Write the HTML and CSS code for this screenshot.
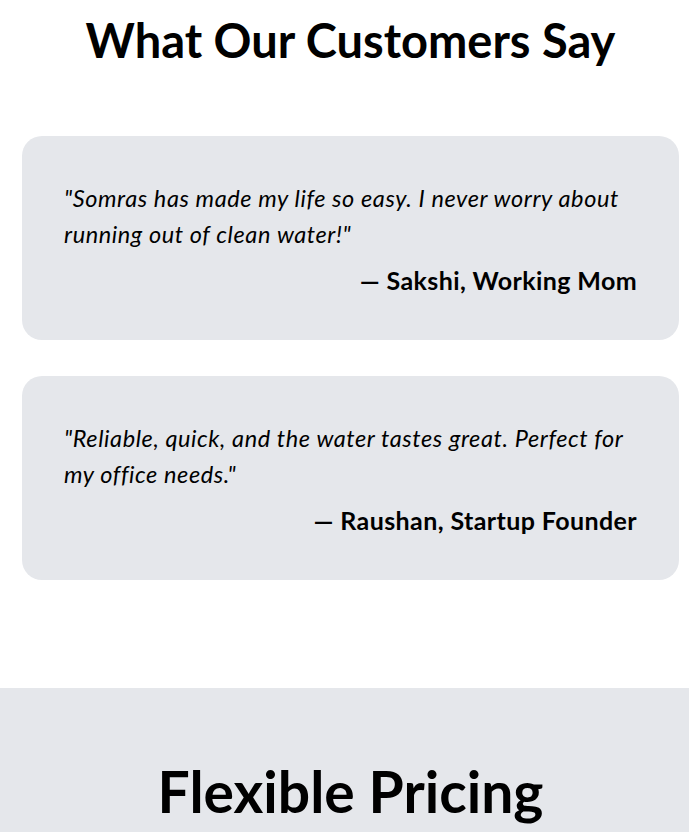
FILE: index.html
```html
<!DOCTYPE html>
<html>
<head>
<meta charset="utf-8">
<link rel="stylesheet" href="styles.css">
</head>
<body>
<section class="testimonials">
  <h2 class="title">What Our Customers Say</h2>
  <div class="cards">
    <div class="card">
      <p class="quote">"Somras has made my life so easy. I never worry about running out of clean water!"</p>
      <p class="author">— Sakshi, Working Mom</p>
    </div>
    <div class="card">
      <p class="quote">"Reliable, quick, and the water tastes great. Perfect for my office needs."</p>
      <p class="author">— Raushan, Startup Founder</p>
    </div>
  </div>
</section>
<section class="pricing">
  <h2 class="pricing-title">Flexible Pricing</h2>
</section>
</body>
</html>
```
FILE: styles.css
```css
body {
  margin: 0;
  font-family: Lato, "Open Sans", sans-serif;
  color: #000;
  background: #fff;
}
.testimonials {
  padding: 12px 10px 108px 22px;
}
.title {
  margin: 0;
  text-align: center;
  font-size: 47px;
  font-weight: 700;
  line-height: 56px;
}
.cards {
  margin-top: 68px;
  display: flex;
  flex-direction: column;
  gap: 36px;
}
.card {
  background: #e5e7eb;
  border-radius: 20px;
  padding: 44px 42px 34px 42px;
  height: 204px;
  box-sizing: border-box;
}
.quote {
  margin: 0;
  font-style: italic;
  font-size: 23.5px;
  line-height: 36px;
  letter-spacing: 0.6px;
}
.author {
  margin: 12px 0 0;
  text-align: right;
  font-weight: 700;
  font-size: 25px;
  line-height: 32px;
  letter-spacing: 0.4px;
}
.pricing {
  background: #e5e7eb;
  padding: 71px 10px 56px 22px;
}
.pricing-title {
  margin: 0;
  text-align: center;
  font-size: 57px;
  font-weight: 700;
  line-height: 64px;
}
```
